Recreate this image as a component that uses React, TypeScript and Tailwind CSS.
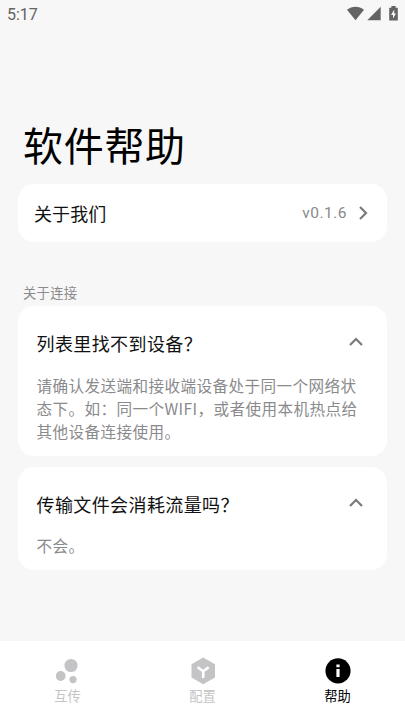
import type { ReactNode } from "react"

const questions = [
  {
    title: "列表里找不到设备？",
    lines: [
      "请确认发送端和接收端设备处于同一个网络状",
      "态下。如：同一个WIFI，或者使用本机热点给",
      "其他设备连接使用。",
    ],
  },
  { title: "传输文件会消耗流量吗？", lines: ["不会。"] },
]

const StatusBar = () => (
  <div className="flex h-7 shrink-0 items-center justify-between pl-[7px] pr-[6px] text-[#636363]">
    <span className="pt-px font-['Roboto','Noto_Sans_CJK_SC',sans-serif] text-[16px] leading-none">5:17</span>
    <svg width="54" height="16" viewBox="0 0 54 16" fill="currentColor">
      <path d="M2 3.7C7-.4 14 -.4 19 3.7L10.5 14.3Z" />
      <path d="M35.7.8v13.4H22.3Z" />
      <path d="M44.2 1.8h2.2V0h4.2v1.8h2.2v12.7h-8.6Z" />
      <path d="M49.2 3.4 46 8.9h2v3.7L51 7.4h-1.8Z" fill="#f7f7f7" />
    </svg>
  </div>
)

const QuestionCard = ({ title, lines }: { title: string; lines: string[] }) => (
  <div className="rounded-[16px] bg-white pb-[13px] pl-[18.5px] pr-[18px] pt-[24px]">
    <div className="flex items-start justify-between">
      <h2 className="text-[18px] leading-[26px] tracking-[0.4px] text-[#111]">{title}</h2>
      <svg className="mr-[6px] mt-[7px]" width="14" height="10" viewBox="0 0 14 10" fill="none" stroke="#7a7a7c" strokeWidth="2.2">
        <path d="M1 8 7 2l6 6" />
      </svg>
    </div>
    <div className="mt-[17.5px] whitespace-nowrap text-[15.6px] leading-[23px] tracking-[0.4px] text-[#8a8a8c]">
      {lines.map((line) => (
        <p key={line}>{line}</p>
      ))}
    </div>
  </div>
)

const NavItem = ({ label, active, children }: { label: string; active?: boolean; children: ReactNode }) => (
  <div className={`flex flex-1 flex-col items-center pt-[16px] ${active ? "text-black" : "text-[#c4c4c6]"}`}>
    <svg width="28" height="28" viewBox="0 0 28 28" fill="currentColor">
      {children}
    </svg>
    <span className="mt-[2px] text-[13.3px] leading-[18px]">{label}</span>
  </div>
)

const App = () => {
  return (
    <div className="flex h-[720px] w-[405px] flex-col overflow-hidden bg-[#f7f7f7] font-['Noto_Sans_CJK_SC',sans-serif]">
      <StatusBar />
      <main className="flex flex-1 flex-col px-[18px]">
        <h1 className="mt-[88px] pl-[5px] text-[40px] leading-[56px] tracking-[0.7px] text-black">软件帮助</h1>
        <div className="mt-[12px] flex h-[58px] items-center justify-between rounded-[16px] bg-white pl-[16px] pr-[19px]">
          <span className="text-[18px] tracking-[0.1px] text-[#111]">关于我们</span>
          <div className="flex items-center gap-[11px]">
            <span className="pt-[2px] font-['Roboto','Noto_Sans_CJK_SC',sans-serif] text-[15.5px] tracking-[0.5px] text-[#8a8a8c]">v0.1.6</span>
            <svg width="10" height="14" viewBox="0 0 10 14" fill="none" stroke="#7a7a7c" strokeWidth="2.2">
              <path d="m2 1 6 6-6 6" />
            </svg>
          </div>
        </div>
        <p className="mt-[41px] pl-[5px] text-[13.3px] leading-[20px] tracking-[0.3px] text-[#8a8a8c]">关于连接</p>
        <div className="mt-[3px] flex flex-col gap-[11px]">
          {questions.map((q) => (
            <QuestionCard key={q.title} title={q.title} lines={q.lines} />
          ))}
        </div>
      </main>
      <nav className="flex h-[79px] shrink-0 bg-white">
        <NavItem label="互传">
          <circle cx="17" cy="8.5" r="6.6" />
          <circle cx="6.7" cy="19" r="4.9" />
          <circle cx="19" cy="22.6" r="3.6" />
        </NavItem>
        <NavItem label="配置">
          <path d="M14.2.5 26 7.3v13.2l-11.8 6.8L2.5 20.5V7.3Z" />
          <path d="m8.7 10.2 5.5 4 5.5-4M14.2 14v7" fill="none" stroke="white" strokeWidth="2.6" />
        </NavItem>
        <NavItem label="帮助" active>
          <circle cx="14" cy="13.8" r="12.6" />
          <path d="M12.4 7.4h3.2v2.8h-3.2ZM12.4 12h3.2v8h-3.2Z" fill="white" />
        </NavItem>
      </nav>
    </div>
  )
}

export default App
